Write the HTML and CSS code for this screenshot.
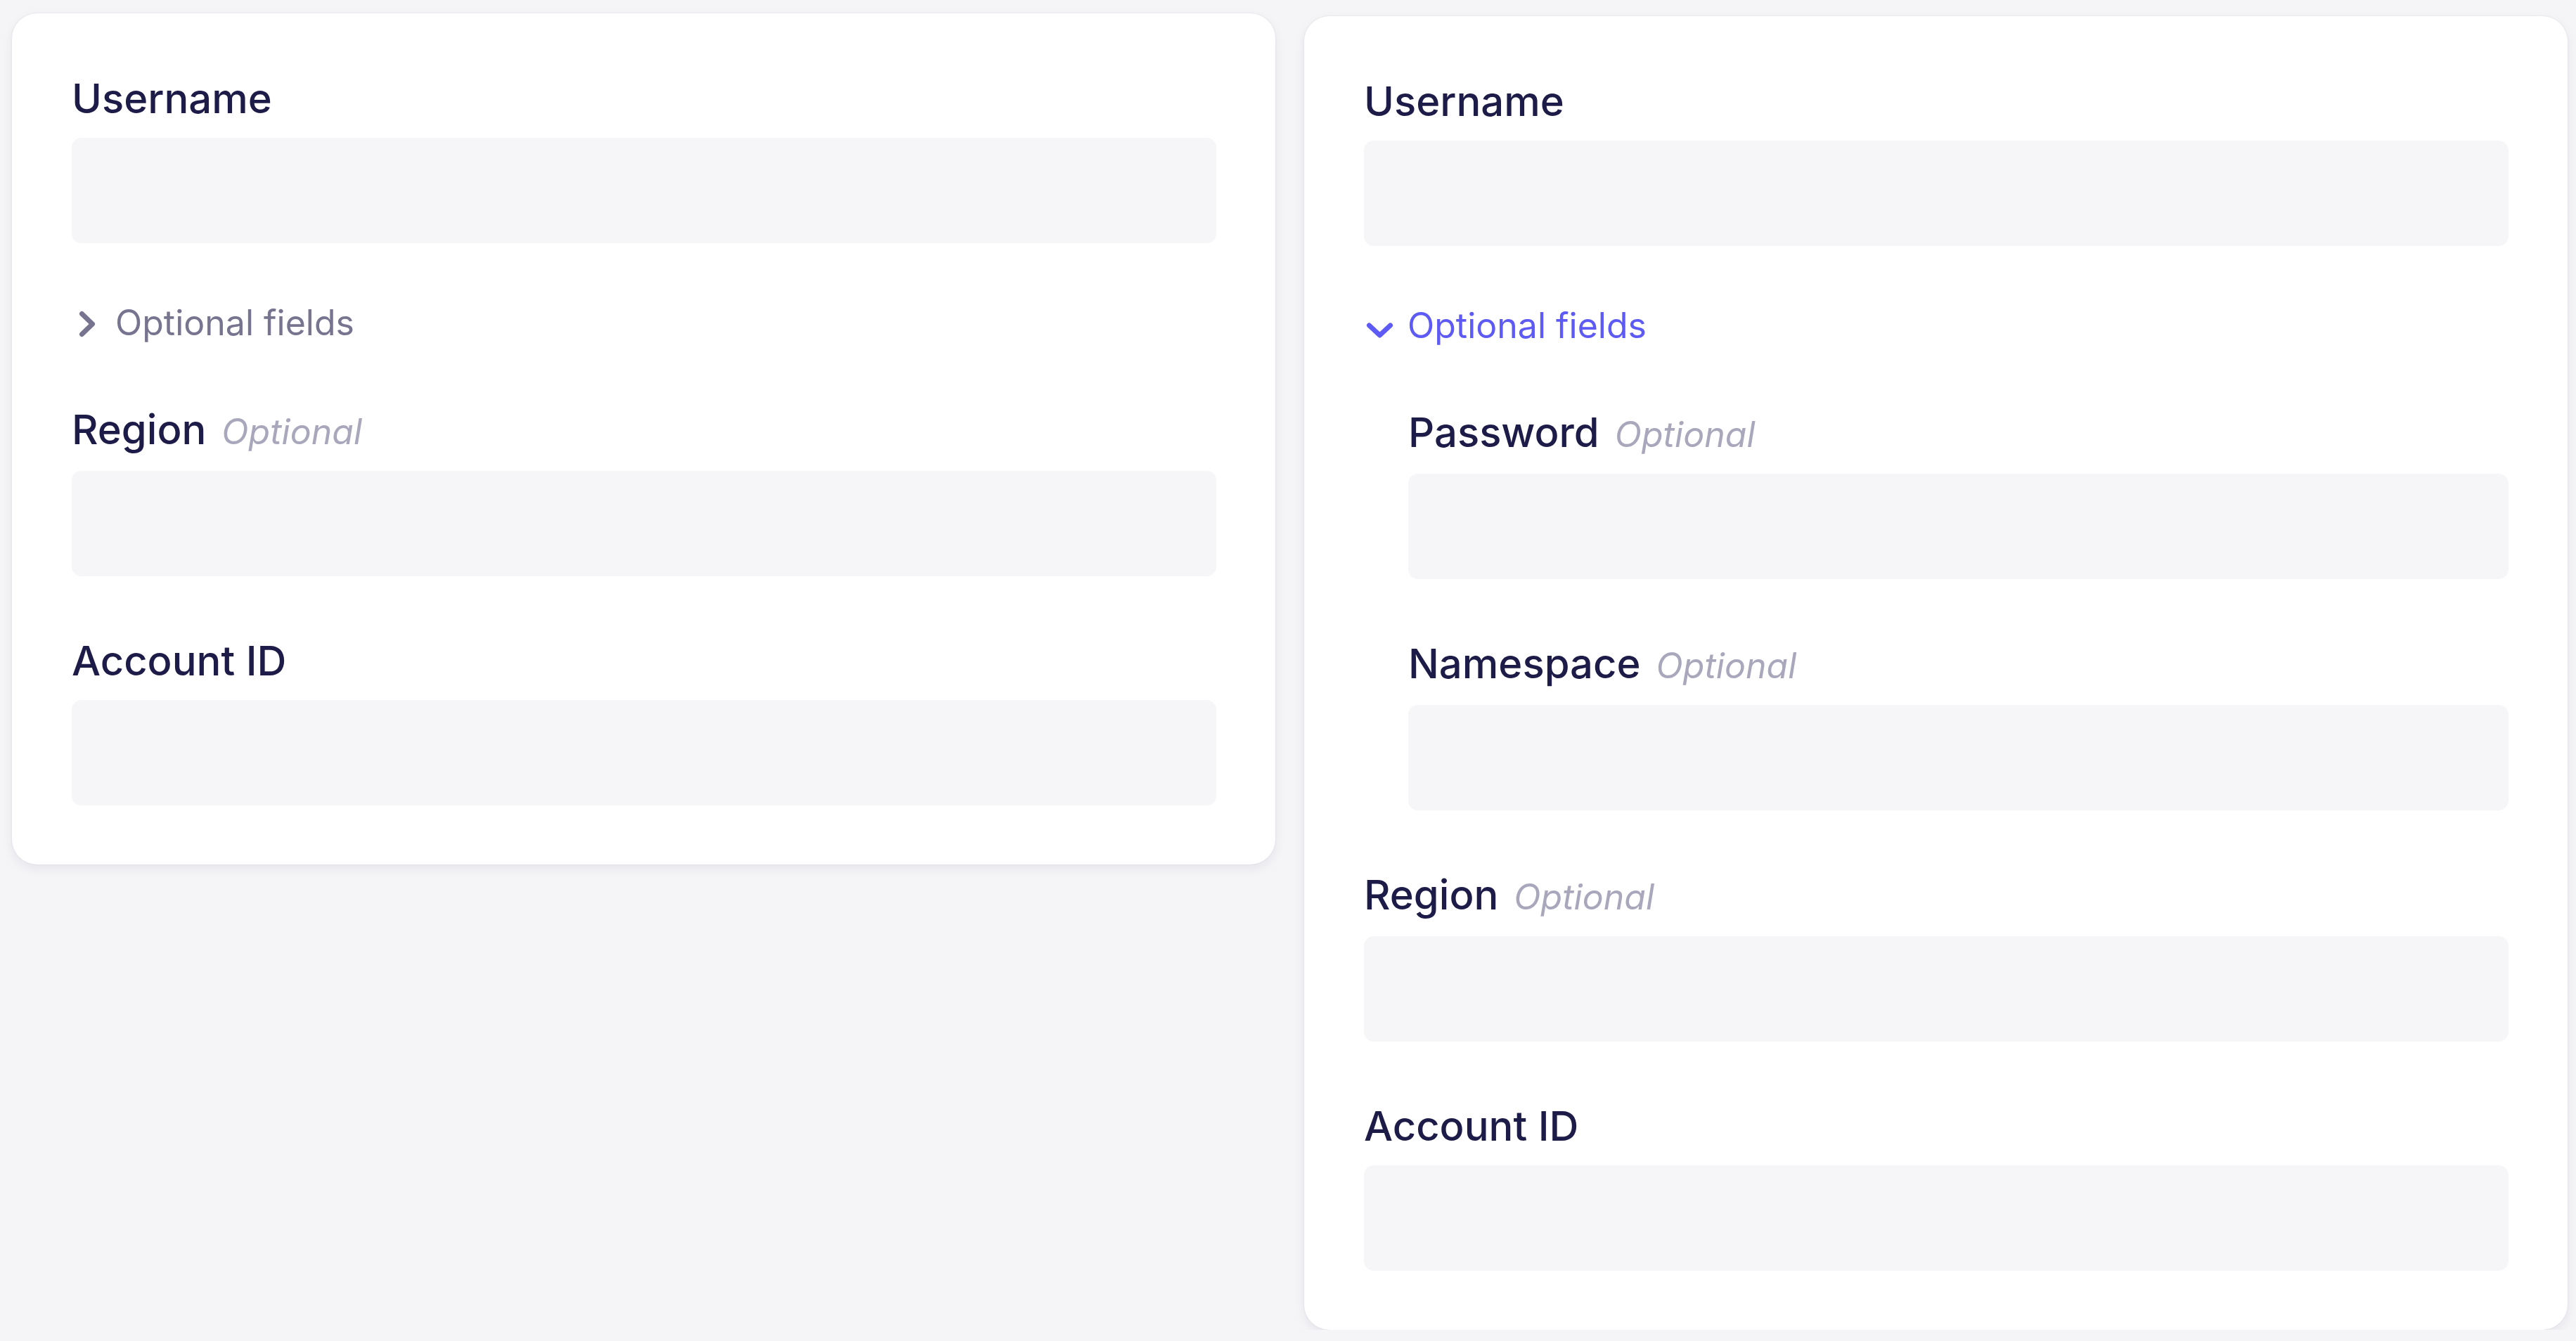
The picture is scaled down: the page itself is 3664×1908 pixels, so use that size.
FILE: index.html
```html
<!DOCTYPE html>
<html lang="en">
<head>
<meta charset="utf-8">
<title>Optional fields</title>
<link rel="stylesheet" href="styles.css">
</head>
<body>
<main class="page">
  <section class="card">
    <div class="field">
      <label class="label">Username</label>
      <div class="input"></div>
    </div>
    <button class="toggle" type="button">
      <svg class="chev" width="42" height="42" viewBox="0 0 42 42"><path d="M14.5 8.5 L29.5 23 L14.5 37.5"/></svg>
      <span>Optional fields</span>
    </button>
    <div class="field field--after-toggle">
      <label class="label">Region<span class="opt">Optional</span></label>
      <div class="input"></div>
    </div>
    <div class="field field--spaced">
      <label class="label">Account ID</label>
      <div class="input"></div>
    </div>
  </section>

  <section class="card card--shifted">
    <div class="field">
      <label class="label">Username</label>
      <div class="input"></div>
    </div>
    <button class="toggle toggle--open" type="button">
      <svg class="chev" width="42" height="42" viewBox="0 0 42 42"><path d="M7.5 21 L22.5 35 L37.5 21"/></svg>
      <span>Optional fields</span>
    </button>
    <div class="optional-group">
      <div class="field">
        <label class="label">Password<span class="opt">Optional</span></label>
        <div class="input"></div>
      </div>
      <div class="field field--spaced">
        <label class="label">Namespace<span class="opt">Optional</span></label>
        <div class="input"></div>
      </div>
    </div>
    <div class="field field--spaced">
      <label class="label">Region<span class="opt">Optional</span></label>
      <div class="input"></div>
    </div>
    <div class="field field--spaced">
      <label class="label">Account ID</label>
      <div class="input"></div>
    </div>
  </section>
</main>
</body>
</html>
```

FILE: styles.css
```css
* { box-sizing: border-box; }

html, body {
  margin: 0;
  background: #f5f5f7;
}

body {
  font-family: Inter, "Noto Sans", "Liberation Sans", sans-serif;
  color: #1d1b48;
}

.page {
  display: grid;
  grid-template-columns: 1fr 1fr;
  column-gap: 41px;
  align-items: start;
  padding: 19px 12px 0 17px;
}

.card {
  background: #ffffff;
  border-radius: 36px;
  padding: 86px 84px 84px 85px;
  display: flex;
  flex-direction: column;
  box-shadow:
    0 0 3px rgba(30, 28, 80, 0.08),
    0 6px 16px rgba(30, 28, 80, 0.07);
}

.card--shifted {
  margin-top: 4px;
}

.field {
  display: flex;
  flex-direction: column;
}

.field--spaced {
  margin-top: 85px;
}

.field--after-toggle {
  margin-top: 82px;
}

.label {
  font-size: 58px;
  line-height: 70px;
  font-weight: 500;
  color: #1d1b48;
  margin-bottom: 21px;
  white-space: nowrap;
}

.opt {
  font-size: 50px;
  font-style: italic;
  font-weight: 400;
  color: #a9a7bc;
  margin-left: 22px;
}

.input {
  height: 150px;
  background: #f6f6f8;
  border-radius: 14px;
}

.toggle {
  margin-top: 78px;
  height: 70px;
  display: flex;
  align-items: center;
  gap: 20px;
  padding: 0;
  border: 0;
  background: none;
  font-family: inherit;
  font-size: 50px;
  line-height: 70px;
  font-weight: 400;
  color: #76748f;
  cursor: pointer;
  align-self: flex-start;
}

.chev {
  flex: none;
  fill: none;
  stroke: currentColor;
  stroke-width: 7;
  stroke-linecap: round;
  stroke-linejoin: round;
}

.toggle--open {
  color: #5d5af5;
}

.optional-group {
  margin-top: 82px;
  margin-left: 63px;
  display: flex;
  flex-direction: column;
}
```
